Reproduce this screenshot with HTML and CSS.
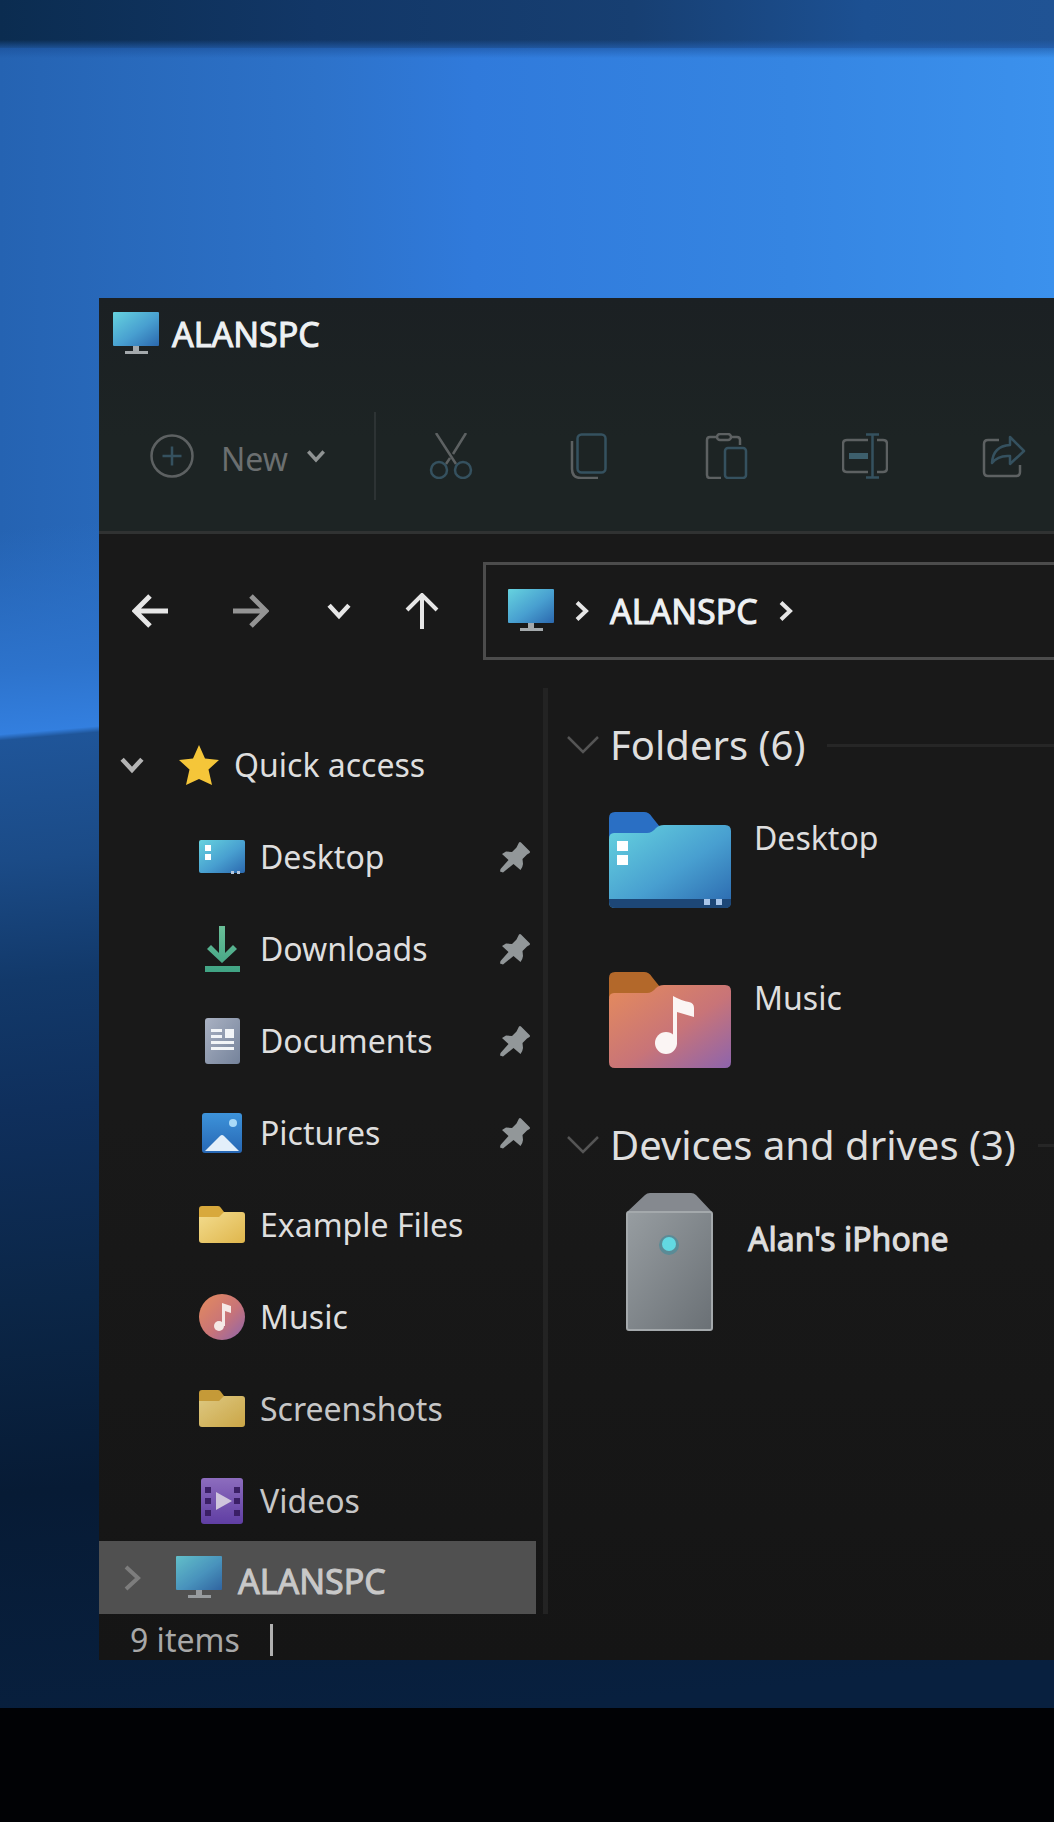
FILE: index.html
```html
<!DOCTYPE html>
<html lang="en">
<head>
    <meta charset="UTF-8">
    <meta name="viewport" content="width=device-width, initial-scale=1.0">
    <title>ALANSPC</title>
    <link rel="stylesheet" href="styles.css">
</head>
<body>

<!-- shared icons -->
<svg class="sprite" width="0" height="0" aria-hidden="true">
    <defs>
        <linearGradient id="screenFill" x1="0" y1="0" x2="1" y2="1">
            <stop offset="0" stop-color="#66d3df"/>
            <stop offset="0.55" stop-color="#489fd0"/>
            <stop offset="1" stop-color="#2b68ae"/>
        </linearGradient>
        <linearGradient id="yellowFill" x1="0" y1="0" x2="1" y2="1">
            <stop offset="0" stop-color="#f3dc8e"/>
            <stop offset="1" stop-color="#dfb64c"/>
        </linearGradient>
        <linearGradient id="musicFill" x1="0" y1="0" x2="1" y2="1">
            <stop offset="0" stop-color="#e58b5c"/>
            <stop offset="0.55" stop-color="#c87478"/>
            <stop offset="1" stop-color="#8d64ad"/>
        </linearGradient>
        <linearGradient id="greyFill" x1="0" y1="0" x2="1" y2="1">
            <stop offset="0" stop-color="#a9b1c2"/>
            <stop offset="1" stop-color="#75839b"/>
        </linearGradient>
        <linearGradient id="greenFill" x1="0" y1="0" x2="0" y2="1">
            <stop offset="0" stop-color="#6abf98"/>
            <stop offset="1" stop-color="#40a384"/>
        </linearGradient>
        <linearGradient id="photoFill" x1="0" y1="0" x2="0" y2="1">
            <stop offset="0" stop-color="#3d93da"/>
            <stop offset="1" stop-color="#2767b4"/>
        </linearGradient>
        <linearGradient id="videoFill" x1="0" y1="0" x2="0" y2="1">
            <stop offset="0" stop-color="#9a76d0"/>
            <stop offset="1" stop-color="#6843b3"/>
        </linearGradient>
        <linearGradient id="caseFill" x1="0" y1="0" x2="1" y2="1">
            <stop offset="0" stop-color="#979da1"/>
            <stop offset="1" stop-color="#6a7075"/>
        </linearGradient>

        <symbol id="pc" viewBox="0 0 46 46">
            <rect x="0" y="1" width="46" height="34" rx="1" fill="url(#screenFill)"/>
            <path d="M20 35h6v5h9v3H12v-3h8z" fill="#a4a9ac"/>
        </symbol>
        <symbol id="pin" viewBox="0 0 32 32">
            <path d="M20 1.500Q21 .5 22 1.500L30.500 10q1 1 0 2L28 13.500l-4.500 4.500.5 5q0 2-2.500 6L14.500 23 4 31.500 1 30.500 1.500 28 9.500 19 3 13l4-2.500 6 .5 4.500-4.500z" fill="#929799"/>
        </symbol>
        <symbol id="folder" viewBox="0 0 48 40">
            <path d="M1 14V4q0-3 3-3h16q2 0 3 2l3 4v7z" fill="#d8a93c"/>
            <path d="M1 12h20l5-5h18q3 0 3 3v25q0 3-3 3H4q-3 0-3-3z" fill="url(#yellowFill)"/>
        </symbol>
        <symbol id="down" viewBox="0 0 28 20">
            <path d="M3 3.500l11 12 11-12" fill="none" stroke="currentColor" stroke-width="5"/>
        </symbol>
        <symbol id="down-thin" viewBox="0 0 34 20">
            <path d="M2 2l15 15L32 2" fill="none" stroke="currentColor" stroke-width="2.500"/>
        </symbol>
        <symbol id="right" viewBox="0 0 14 20">
            <path d="M2 1.500L11 10l-9 8.500" fill="none" stroke="currentColor" stroke-width="4"/>
        </symbol>
    </defs>
</svg>

<div class="screen-edge"></div>

<main class="desktop">
    <div class="window">
        <header class="ribbon">
            <div class="title-bar">
                <svg class="icon-pc" aria-hidden="true"><use href="#pc"/></svg>
                <h1 class="pc-name">ALANSPC</h1>
            </div>
            <div class="toolbar">
                <button class="new-button" type="button">
                    <svg width="44" height="44" viewBox="0 0 44 44" fill="none" aria-hidden="true">
                        <circle cx="22" cy="22" r="20.500" stroke="#5d6162" stroke-width="2.500"/>
                        <path d="M22 12.500v19M12.500 22h19" stroke="#35515f" stroke-width="2.500"/>
                    </svg>
                    <span>New</span>
                    <svg class="new-arrow" width="20" height="14" aria-hidden="true"><use href="#down"/></svg>
                </button>
                <div class="tools">
                    <button type="button" aria-label="Cut">
                        <svg width="46" height="46" viewBox="0 0 46 46" fill="none" stroke-width="2.500" aria-hidden="true">
                            <path d="M8 0l20 31M38 0L25 21M22 25l-4 6" stroke="#5d6162"/>
                            <g stroke="#35515f"><circle cx="11" cy="37" r="8"/><circle cx="35" cy="37" r="8"/></g>
                        </svg>
                    </button>
                    <button type="button" aria-label="Copy">
                        <svg width="46" height="46" viewBox="0 0 46 46" fill="none" stroke-width="2.500" aria-hidden="true">
                            <path d="M6 8v28q0 9 9 9h17" stroke="#5d6162"/>
                            <rect x="11.500" y="1.500" width="28" height="38" rx="4" stroke="#35515f"/>
                        </svg>
                    </button>
                    <button type="button" aria-label="Paste">
                        <svg width="46" height="46" viewBox="0 0 46 46" fill="none" stroke-width="2.500" aria-hidden="true">
                            <path d="M13 4H6q-3 0-3 3v35q0 3 3 3h11M27 4h6q3 0 3 3v5" stroke="#5d6162"/>
                            <rect x="13" y="1" width="14" height="6" rx="3" stroke="#5d6162"/>
                            <rect x="21" y="15" width="21" height="30" rx="3" stroke="#35515f"/>
                        </svg>
                    </button>
                    <button type="button" aria-label="Rename">
                        <svg width="46" height="46" viewBox="0 0 46 46" fill="none" stroke-width="2.500" aria-hidden="true">
                            <path d="M26 7H5q-4 0-4 4v24q0 4 4 4h21M35 7h6q4 0 4 4v24q0 4-4 4h-6" stroke="#5d6162"/>
                            <path d="M24 1.500h13M24 44.500h13M30.500 1.500v43" stroke="#35515f"/>
                            <path d="M7 23h19" stroke="#3d5f6c" stroke-width="6"/>
                        </svg>
                    </button>
                    <button type="button" aria-label="Share">
                        <svg width="46" height="46" viewBox="0 0 46 46" fill="none" stroke-width="2.500" stroke-linejoin="round" aria-hidden="true">
                            <path d="M19 7H8q-4 0-4 4v28q0 4 4 4h28q4 0 4-4v-7" stroke="#5d6162"/>
                            <path d="M30 4l14 14-14 13v-8q-12-1-18 7 1-17 18-18z" stroke="#35515f"/>
                        </svg>
                    </button>
                </div>
            </div>
        </header>

        <div class="address-row">
            <button class="nav-button" type="button" aria-label="Back">
                <svg width="36" height="34" viewBox="0 0 36 34" aria-hidden="true"><path d="M18 2L3 17l15 15M3 17h33" fill="none" stroke="#e6e6e6" stroke-width="5"/></svg>
            </button>
            <button class="nav-button" type="button" aria-label="Forward" disabled>
                <svg width="36" height="34" viewBox="0 0 36 34" aria-hidden="true"><path d="M18 2l15 15-15 15M33 17H0" fill="none" stroke="#949494" stroke-width="5"/></svg>
            </button>
            <button class="nav-button nav-recent" type="button" aria-label="Recent locations">
                <svg width="28" height="18" aria-hidden="true"><use href="#down"/></svg>
            </button>
            <button class="nav-button nav-up" type="button" aria-label="Up">
                <svg width="34" height="36" viewBox="0 0 34 36" aria-hidden="true"><path d="M2 17L17 2l15 15M17 2v34" fill="none" stroke="#e6e6e6" stroke-width="4"/></svg>
            </button>
            <nav class="address" aria-label="Address">
                <svg class="icon-pc" aria-hidden="true"><use href="#pc"/></svg>
                <svg width="14" height="20" aria-hidden="true"><use href="#right"/></svg>
                <a class="pc-name" href="#">ALANSPC</a>
                <svg width="14" height="20" aria-hidden="true"><use href="#right"/></svg>
            </nav>
        </div>

        <div class="panes">
            <nav class="sidebar" aria-label="Folders">
                <ul class="tree">
                    <li>
                        <a class="row" href="#">
                            <svg class="toggle" width="28" height="18" aria-hidden="true"><use href="#down"/></svg>
                            <svg width="42" height="42" viewBox="0 0 42 42" aria-hidden="true"><path d="M21 1l6 13.500 14 1.500-10.500 9.500 3.500 15.500-13-6-13 6 3.500-15.500L1 16l14-1.500z" fill="#f5c639"/></svg>
                            <span>Quick access</span>
                        </a>
                    </li>
                    <li>
                        <a class="row child" href="#">
                            <svg width="48" height="48" viewBox="0 0 48 48" aria-hidden="true">
                                <rect x="1" y="7" width="46" height="33" rx="2" fill="url(#screenFill)"/>
                                <path d="M7 12h6v6H7zM7 21h6v6H7z" fill="#fff"/>
                                <path d="M33 38h3v3h-3zM39 38h3v3h-3z" fill="#b7c9df"/>
                            </svg>
                            <span>Desktop</span>
                            <svg class="pin" aria-hidden="true"><use href="#pin"/></svg>
                        </a>
                    </li>
                    <li>
                        <a class="row child" href="#">
                            <svg width="48" height="48" viewBox="0 0 48 48" aria-hidden="true"><path d="M21 1h6v27l8-8 4 4-15 14L9 24l4-4 8 8zM7 41h35v6H7z" fill="url(#greenFill)"/></svg>
                            <span>Downloads</span>
                            <svg class="pin" aria-hidden="true"><use href="#pin"/></svg>
                        </a>
                    </li>
                    <li>
                        <a class="row child" href="#">
                            <svg width="48" height="48" viewBox="0 0 48 48" aria-hidden="true">
                                <rect x="7" y="1" width="35" height="46" rx="3" fill="url(#greyFill)"/>
                                <path d="M13 12h11v3H13zM13 18h11v3H13zM27 12h9v9h-9zM13 24h23v3H13zM13 30h23v3H13z" fill="#f2f5f8"/>
                            </svg>
                            <span>Documents</span>
                            <svg class="pin" aria-hidden="true"><use href="#pin"/></svg>
                        </a>
                    </li>
                    <li>
                        <a class="row child" href="#">
                            <svg width="48" height="48" viewBox="0 0 48 48" aria-hidden="true">
                                <rect x="4" y="4" width="40" height="40" rx="3" fill="url(#photoFill)"/>
                                <path d="M7 42l15-15q2-2 4 0l15 15z" fill="#e3effa"/>
                                <circle cx="35" cy="14" r="4" fill="#a9daf8"/>
                            </svg>
                            <span>Pictures</span>
                            <svg class="pin" aria-hidden="true"><use href="#pin"/></svg>
                        </a>
                    </li>
                    <li>
                        <a class="row child" href="#">
                            <svg width="48" height="40" aria-hidden="true"><use href="#folder"/></svg>
                            <span>Example Files</span>
                        </a>
                    </li>
                    <li>
                        <a class="row child" href="#">
                            <svg width="48" height="48" viewBox="0 0 48 48" aria-hidden="true">
                                <circle cx="24" cy="24" r="23" fill="url(#musicFill)"/>
                                <circle cx="21" cy="33" r="5" fill="#f5e9e6"/>
                                <path d="M24 10l9 3v7l-6-2v15h-3z" fill="#f5e9e6"/>
                            </svg>
                            <span>Music</span>
                        </a>
                    </li>
                    <li>
                        <a class="row child dim" href="#">
                            <svg width="48" height="40" aria-hidden="true"><use href="#folder"/></svg>
                            <span>Screenshots</span>
                        </a>
                    </li>
                    <li>
                        <a class="row child dim" href="#">
                            <svg width="48" height="48" viewBox="0 0 48 48" aria-hidden="true">
                                <rect x="3" y="1" width="42" height="46" rx="3" fill="url(#videoFill)"/>
                                <path d="M7 10h6v6H7zM7 21h6v6H7zM7 33h6v6H7zM36 10h6v6h-6zM36 21h6v6h-6zM36 33h6v6h-6z" fill="#40216f"/>
                                <path d="M18 15l16 9-16 9z" fill="#e4d9f2"/>
                            </svg>
                            <span>Videos</span>
                        </a>
                    </li>
                </ul>
                <a class="row selected" href="#" aria-current="page">
                    <svg class="toggle" width="28" height="26" viewBox="0 0 28 26" aria-hidden="true"><path d="M8 2l12 11L8 24" fill="none" stroke="#7d7d7d" stroke-width="4"/></svg>
                    <svg class="icon-pc" aria-hidden="true"><use href="#pc"/></svg>
                    <span class="pc-name">ALANSPC</span>
                </a>
            </nav>

            <section class="content">
                <div class="group-head">
                    <svg width="34" height="20" aria-hidden="true"><use href="#down-thin"/></svg>
                    <h2>Folders (6)</h2>
                    <hr>
                </div>
                <div class="tiles">
                    <a class="tile" href="#">
                        <svg width="122" height="96" viewBox="0 0 122 96" aria-hidden="true">
                            <path d="M0 26V6q0-6 6-6h29q5 0 8 5l8 10v11z" fill="#2a6fc4"/>
                            <path d="M0 27q0-6 5-6h33q5 0 9-5 3-3 8-3h61q6 0 6 6v71q0 6-6 6H6q-6 0-6-6z" fill="url(#screenFill)"/>
                            <path d="M0 87h122v3q0 6-6 6H6q-6 0-6-6z" fill="#1d4777"/>
                            <path d="M8 29h11v10H8zM8 43h11v10H8z" fill="#fff"/>
                            <path d="M95 87h6v6h-6zM107 87h6v6h-6z" fill="#a9c6ea"/>
                        </svg>
                        <span>Desktop</span>
                    </a>
                    <a class="tile" href="#">
                        <svg width="122" height="96" viewBox="0 0 122 96" aria-hidden="true">
                            <path d="M0 26V6q0-6 6-6h29q5 0 8 5l8 10v11z" fill="#b3682a"/>
                            <path d="M0 27q0-6 5-6h33q5 0 9-5 3-3 8-3h61q6 0 6 6v71q0 6-6 6H6q-6 0-6-6z" fill="url(#musicFill)"/>
                            <circle cx="57" cy="71" r="11" fill="#fbf5f4"/>
                            <path d="M64 24q9 5 16 6 5 1 5 6v9l-17-5v32h-4z" fill="#fbf5f4"/>
                        </svg>
                        <span>Music</span>
                    </a>
                </div>
                <div class="group-head">
                    <svg width="34" height="20" aria-hidden="true"><use href="#down-thin"/></svg>
                    <h2>Devices and drives (3)</h2>
                    <hr>
                </div>
                <a class="tile device" href="#">
                    <svg width="122" height="138" viewBox="0 0 122 138" aria-hidden="true">
                        <path d="M18 19L36 2q2-2 5-2h41q3 0 5 2l16 17z" fill="#85898f"/>
                        <rect x="18" y="19" width="85" height="118" rx="2" fill="url(#caseFill)" stroke="#a4a9ac" stroke-width="2"/>
                        <circle cx="60" cy="52" r="10" fill="#5b8b96"/>
                        <circle cx="60" cy="51" r="7" fill="#62d9e2"/>
                    </svg>
                    <span>Alan's iPhone</span>
                </a>
            </section>
        </div>

        <footer class="status-bar">
            <span>9 items</span>
            <span class="status-divider"></span>
        </footer>
    </div>
</main>

<div class="bezel"></div>

</body>
</html>
```

FILE: styles.css
```css
* {
    box-sizing: border-box;
}

body {
    display: flex;
    flex-direction: column;
    margin: 0;
    min-height: 100vh;
    overflow-x: hidden;
    background-color: #010205;
    color: #dedede;
    font-family: "Noto Sans", "Open Sans", sans-serif;
    font-size: 32px;
    line-height: 40px;
}

svg {
    flex: none;
    display: block;
}

.sprite {
    position: absolute;
}

a {
    color: inherit;
    text-decoration: none;
}

button {
    display: flex;
    align-items: center;
    justify-content: center;
    padding: 0;
    border: none;
    background: none;
    color: inherit;
    font: inherit;
}

h1,
h2 {
    margin: 0;
    font-weight: normal;
}

.screen-edge {
    height: 48px;
    background:
        linear-gradient(to bottom, transparent 40px, rgba(39, 103, 190, 0.6)),
        linear-gradient(to right, #0b2c50, #123767 30%, #173f72 60%, #1c5092 82%, #205394);
}

.desktop {
    flex: 1;
    padding: 250px 0 48px 99px;
    background:
        linear-gradient(to bottom, rgba(24, 74, 145, 0.5), transparent 10px),
        linear-gradient(175deg, transparent 480px, #2d73cc 620px, #337fdf 684px, #1f5599 690px, #1b4b87 810px, #12396a 930px, #0f2f5c 1060px, #0b2647 1250px, #071b35 1440px, #08203f 1700px),
        linear-gradient(to right, #2563b2, #2d72c9 30%, #307adb 45%, #3585e2 75%, #3b91ed);
}

.bezel {
    height: 114px;
    background-color: #010205;
}

.window {
    background: linear-gradient(to bottom, #191919 60%, #151515);
}

/* ribbon */

.ribbon {
    border-bottom: 3px solid #303232;
    background: linear-gradient(to bottom, #1b2023, #1d2424 60%);
}

.title-bar {
    display: flex;
    align-items: center;
    gap: 13px;
    height: 82px;
    padding: 0 14px 10px;
}

.icon-pc {
    width: 46px;
    height: 46px;
}

/* the machine name is drawn heavier than the rest */
.pc-name {
    color: #eef1f3;
    font-size: 34px;
    -webkit-text-stroke: 1px currentColor;
}

.toolbar {
    display: flex;
    align-items: center;
    height: 151px;
    padding-left: 51px;
}

.new-button {
    color: #6b6f70;
}

.new-button span {
    margin: 0 18px 0 27px;
    padding-top: 6px;
}

.new-arrow {
    color: #8f9393;
}

.tools {
    display: flex;
    align-items: center;
    gap: 92px;
    height: 88px;
    margin-left: 48px;
    padding-left: 52px;
    border-left: 2px solid #2d3334;
}

/* address */

.address-row {
    display: flex;
    align-items: center;
    height: 154px;
}

.nav-button {
    width: 101px;
    height: 60px;
    color: #e6e6e6;
}

.nav-recent {
    width: 75px;
}

.nav-up {
    width: 91px;
    margin-right: 16px;
}

.address {
    display: flex;
    flex: 1;
    align-items: center;
    gap: 21px;
    height: 98px;
    padding-left: 22px;
    border: 3px solid #4c4c4c;
    border-right: none;
    color: #e6e6e6;
}

/* panes */

.panes {
    display: flex;
}

.sidebar {
    flex: none;
    width: 449px;
    padding-top: 37px;
    border-right: 5px solid #232323;
}

.tree {
    display: flex;
    flex-direction: column;
    gap: 12px;
    margin: 0;
    padding: 0;
    list-style: none;
}

.row {
    display: flex;
    align-items: center;
    gap: 14px;
    height: 80px;
    margin-right: 7px;
    padding-left: 19px;
}

.row .toggle {
    margin-right: 18px;
    color: #b4b4b4;
}

.child {
    padding-left: 99px;
}

.pin {
    width: 32px;
    height: 32px;
    margin-left: auto;
    margin-right: 5px;
}

.dim {
    color: #c6c6c6;
}

.dim svg {
    opacity: 0.9;
}

.selected {
    gap: 16px;
    height: 73px;
    background-color: #505050;
}

.selected .toggle {
    margin-right: 14px;
}

.selected .icon-pc {
    opacity: 0.85;
}

.selected .pc-name {
    padding-top: 6px;
    color: #c8c8c8;
}

.content {
    flex: 1;
    min-width: 0;
    padding: 30px 0 0 18px;
}

.group-head {
    display: flex;
    align-items: center;
    gap: 10px;
    height: 54px;
    color: #555;
}

.group-head h2 {
    color: #dedede;
    font-size: 40px;
    white-space: nowrap;
}

.group-head hr {
    flex: 1;
    margin: 0 0 0 12px;
    border: none;
    border-top: 3px solid #262626;
}

.tiles {
    display: flex;
    flex-direction: column;
    gap: 64px;
    padding: 40px 0 50px;
}

.tile {
    display: flex;
    gap: 23px;
    padding-left: 43px;
}

.tile span {
    margin-top: 6px;
}

.device {
    padding-top: 21px;
}

.device span {
    margin-top: 26px;
    margin-left: -6px;
    -webkit-text-stroke: 1px currentColor;
}

/* status bar */

.status-bar {
    display: flex;
    align-items: center;
    gap: 30px;
    height: 46px;
    padding: 6px 0 0 31px;
    color: #a8a8a8;
}

.status-divider {
    width: 3px;
    height: 32px;
    background-color: #b0b0b0;
}
```
